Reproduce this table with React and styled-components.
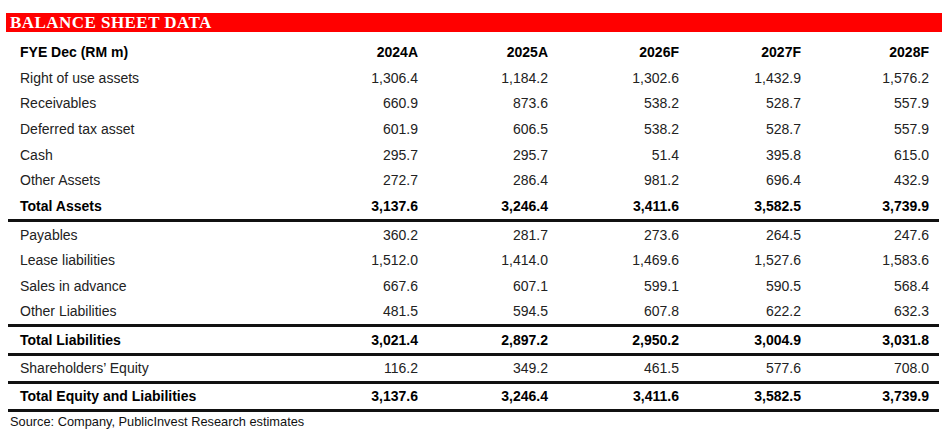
import React from 'react';
import styled, { createGlobalStyle } from 'styled-components';

const GlobalStyle = createGlobalStyle`
  body {
    margin: 0;
    background: #fff;
    font-family: 'Liberation Sans', Arial, sans-serif;
  }
`;

const Page = styled.div`
  width: 936px;
  padding: 13px 6px 0 6px;
`;

const TitleBar = styled.div`
  height: 19px;
  line-height: 20px;
  background: #ff0000;
  color: #fff;
  font-family: 'Liberation Serif', 'Times New Roman', serif;
  font-weight: bold;
  font-size: 17px;
  padding-left: 4px;
  letter-spacing: 0.45px;
`;

const Table = styled.div`
  margin: 7px 3px 0 2px;
`;

const Section = styled.div`
  border-bottom: 3px solid #111;
`;

const Row = styled.div`
  display: grid;
  grid-template-columns: 268px 130px 130px 131px 122px 128px;
  align-items: center;
  height: ${({ $h }) => $h}px;
  padding: 0 11px 0 12px;
  font-size: 14px;
  color: ${({ $bold }) => ($bold ? '#000' : '#222')};
  font-weight: ${({ $bold }) => ($bold ? 'bold' : 'normal')};
`;

const Label = styled.span`
  white-space: nowrap;
`;

const Value = styled.span`
  text-align: right;
`;

const Source = styled.div`
  margin: 2px 0 0 4px;
  font-size: 12.8px;
  color: #111;
`;

const sections = [
  {
    h: 25.7,
    rows: [
      ['FYE Dec (RM m)', '2024A', '2025A', '2026F', '2027F', '2028F', true],
      ['Right of use assets', '1,306.4', '1,184.2', '1,302.6', '1,432.9', '1,576.2'],
      ['Receivables', '660.9', '873.6', '538.2', '528.7', '557.9'],
      ['Deferred tax asset', '601.9', '606.5', '538.2', '528.7', '557.9'],
      ['Cash', '295.7', '295.7', '51.4', '395.8', '615.0'],
      ['Other Assets', '272.7', '286.4', '981.2', '696.4', '432.9'],
      ['Total Assets', '3,137.6', '3,246.4', '3,411.6', '3,582.5', '3,739.9', true],
    ],
  },
  {
    h: 25.5,
    rows: [
      ['Payables', '360.2', '281.7', '273.6', '264.5', '247.6'],
      ['Lease liabilities', '1,512.0', '1,414.0', '1,469.6', '1,527.6', '1,583.6'],
      ['Sales in advance', '667.6', '607.1', '599.1', '590.5', '568.4'],
      ['Other Liabilities', '481.5', '594.5', '607.8', '622.2', '632.3'],
    ],
  },
  {
    h: 26,
    rows: [['Total Liabilities', '3,021.4', '2,897.2', '2,950.2', '3,004.9', '3,031.8', true]],
  },
  {
    h: 25,
    rows: [['Shareholders\u2019 Equity', '116.2', '349.2', '461.5', '577.6', '708.0']],
  },
  {
    h: 25,
    rows: [['Total Equity and Liabilities', '3,137.6', '3,246.4', '3,411.6', '3,582.5', '3,739.9', true]],
  },
];

const App = () => {
  return (
    <>
      <GlobalStyle />
      <Page>
        <TitleBar>BALANCE SHEET DATA</TitleBar>
        <Table>
          {sections.map((section, i) => (
            <Section key={i}>
              {section.rows.map(row => {
                const [label, ...rest] = row;
                const bold = rest.length > 5 && rest[5] === true;
                const values = rest.slice(0, 5);
                return (
                  <Row key={label} $h={section.h} $bold={bold}>
                    <Label>{label}</Label>
                    {values.map((v, j) => (
                      <Value key={j}>{v}</Value>
                    ))}
                  </Row>
                );
              })}
            </Section>
          ))}
        </Table>
        <Source>Source: Company, PublicInvest Research estimates</Source>
      </Page>
    </>
  );
};

export default App;
